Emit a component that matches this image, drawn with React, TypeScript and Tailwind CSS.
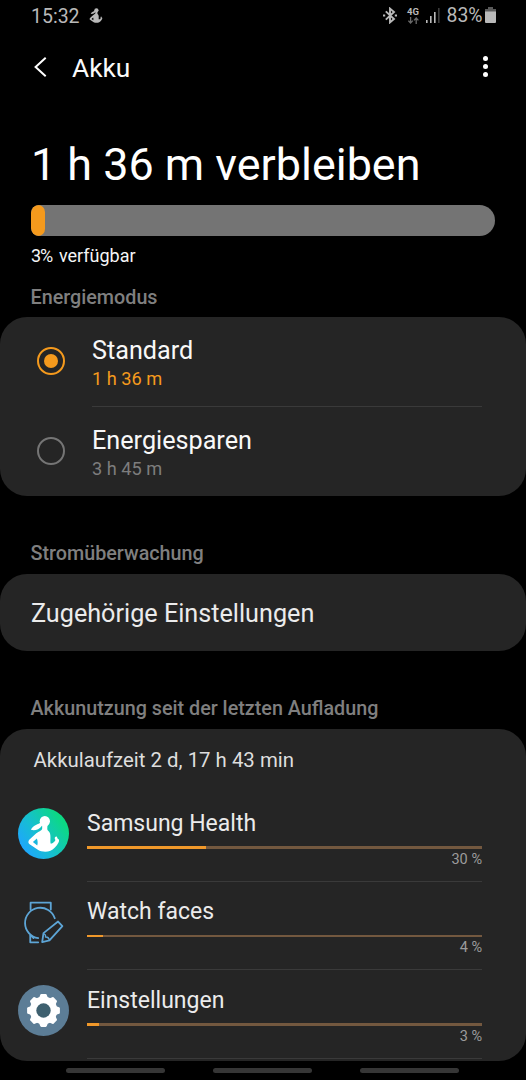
import { ReactNode } from 'react';

function HealthFigure() {
  return (
    <g>
      <circle cx="104" cy="64" r="15.5" />
      <path d="M93 67C84 74 70 74 62 90C72 93 86 91 96 77Z" />
      <path
        fillRule="evenodd"
        d="M96 74H112C112 85 110 89 114 93C120 98 121 104 121 112C121 121 120 127 122 132C129 131 134 126 136 121C132 115 134 110 140 110L143 117C148 118 148 124 145 129C140 140 130 149 121 153C110 158 92 156 84 151L57 133C53 129 54 124 57 120L75 103C84 95 96 93 96 86ZM80 116L68 127L81 137C83 131 83 124 80 116Z"
      />
    </g>
  );
}

function HealthIcon() {
  return (
    <svg viewBox="23 24 154 154" className="size-[51px]">
      <defs>
        <linearGradient id="health" x1="0.1" y1="0.85" x2="0.9" y2="0.3">
          <stop offset="0" stopColor="#1fa5ff" />
          <stop offset="0.45" stopColor="#16bfd0" />
          <stop offset="1" stopColor="#0cd984" />
        </linearGradient>
      </defs>
      <circle cx="100" cy="101" r="77" fill="url(#health)" />
      <g fill="#fff">
        <HealthFigure />
      </g>
    </svg>
  );
}

function WatchIcon() {
  return (
    <svg
      viewBox="23 20 154 154"
      className="size-[51px]"
      fill="none"
      stroke="#5da5d6"
      strokeWidth="5.5"
      strokeLinejoin="round"
      strokeLinecap="round"
    >
      <path d="M61 58V37H122V58" />
      <path d="M134 84A46 46 0 1 0 84 144" />
      <path d="M60 136V157H84" />
      <path d="M61 136L70 144" />
      <path d="M100 129L144 94L157 108L118 151L96 156Z" />
      <path d="M101 131C106 133 107 137 106 141C112 140 116 144 118 150" strokeWidth="4" />
    </svg>
  );
}

function SettingsIcon() {
  return (
    <svg viewBox="-25.5 -25.5 51 51" className="size-[51px]">
      <circle r="25.5" fill="#5c7d96" />
      <g fill="#fff">
        <circle r="13.9" />
        {[0, 45, 90, 135, 180, 225, 270, 315].map((a) => (
          <path key={a} d="M-4.6 -12L-3.3 -15.6Q-3 -16.4 -2.2 -16.4H2.2Q3 -16.4 3.3 -15.6L4.6 -12Z" transform={`rotate(${a})`} />
        ))}
      </g>
      <circle r="7.2" fill="#3e606f" />
    </svg>
  );
}

function StatusBar() {
  return (
    <div className="flex h-[31px] items-center pl-[31px] pr-[30px] text-[#b9b9b9]">
      <span className="pt-px text-[19.5px] leading-[31px]">15:32</span>
      <svg viewBox="50 47 102 110" className="ml-[9px] h-[15px] w-[14px]" fill="#b9b9b9">
        <HealthFigure />
      </svg>
      <div className="ml-auto flex items-center">
        <svg viewBox="0 0 14 17" className="mb-px h-[17px] w-[14px]" fill="none" stroke="#b9b9b9" strokeWidth="1.9">
          <path d="M2.8 4.4L11 12L7 15.4V1.6L11 5L2.8 12.6" />
          <path d="M0 8.5H2.2M11.8 8.5H14" strokeWidth="2.2" />
        </svg>
        <div className="ml-[10px] flex w-3 flex-col items-center">
          <span className="text-[9.5px] font-bold leading-[9px]">4G</span>
          <svg viewBox="0 0 11 7" className="mt-px h-[7px] w-[11px]" fill="none" stroke="#6a6a6a" strokeWidth="1.3">
            <path d="M2.6 0V6M0.4 3.6L2.6 6L4.8 3.6M8.2 7V1M6 3.4L8.2 1L10.4 3.4" />
          </svg>
        </div>
        <svg viewBox="0 0 14 15" className="ml-[7px] h-[15px] w-[14px]" fill="#b9b9b9">
          <rect x="0" y="12" width="1.6" height="3" />
          <rect x="4" y="8" width="1.6" height="7" />
          <rect x="8" y="4" width="1.6" height="11" />
          <rect x="12" y="0" width="1.6" height="15" fill="#3c3c3c" />
        </svg>
        <span className="ml-[6.5px] text-[19.4px] leading-[31px]">83%</span>
        <svg viewBox="0 0 11 16" className="mb-px ml-[2.5px] h-4 w-[11px]">
          <path d="M3 0H8V2H11V5H0V2H3Z" fill="#5a5a5a" />
          <path d="M0 4.5H11V15Q11 16 10 16H1Q0 16 0 15Z" fill="#b9b9b9" />
        </svg>
      </div>
    </div>
  );
}

function SectionTitle({ children }: { children: ReactNode }) {
  return <h2 className="pl-[30.5px] text-[19.75px] font-medium leading-6 text-[#7f7f7f]">{children}</h2>;
}

function ModeRow({ title, time, selected }: { title: string; time: string; selected?: boolean }) {
  return (
    <div className="flex pl-[37px] pr-11">
      <div
        className={
          selected
            ? 'mt-[30px] flex size-7 items-center justify-center rounded-full border-2 border-[#f59a1d]'
            : 'mt-[30px] flex size-7 items-center justify-center rounded-full border-2 border-[#757575]'
        }
      >
        {selected && <div className="size-[14px] rounded-full bg-[#f59a1d]" />}
      </div>
      <div
        className={
          selected
            ? 'ml-[27px] h-[90px] flex-1 border-b border-[#3a3a3a] pt-[19px]'
            : 'ml-[27px] h-[89px] flex-1 pt-[19px]'
        }
      >
        <div className="text-[25.2px] leading-[30px] text-[#f8f8f8]">{title}</div>
        <div className={selected ? 'mt-[2px] text-[18.2px] leading-[22px] text-[#f59a1d]' : 'mt-[2px] text-[18.2px] leading-[22px] text-[#7d7d7d]'}>
          {time}
        </div>
      </div>
    </div>
  );
}

const apps = [
  { name: 'Samsung Health', percent: 30, icon: <HealthIcon /> },
  { name: 'Watch faces', percent: 4, icon: <WatchIcon /> },
  { name: 'Einstellungen', percent: 3, icon: <SettingsIcon /> },
];

export default function App() {
  return (
    <div className="h-[1080px] w-[526px] overflow-hidden bg-black font-['Roboto',sans-serif]">
      <StatusBar />

      <header className="flex h-[74px] items-center pl-[34px] pr-[38px]">
        <svg viewBox="0 0 13 20" className="mb-[2px] h-5 w-[13px]" fill="none" stroke="#fff" strokeWidth="2">
          <path d="M11.7 0.8L1.6 10L11.7 19.2" />
        </svg>
        <h1 className="ml-[25px] text-[26.3px] leading-[30px] text-[#fafafa]">Akku</h1>
        <div className="mb-[3px] ml-auto flex flex-col gap-[3px]">
          <span className="size-[5px] rounded-full bg-white" />
          <span className="size-[5px] rounded-full bg-white" />
          <span className="size-[5px] rounded-full bg-white" />
        </div>
      </header>

      <div className="mt-[30px] px-[31px]">
        <div className="whitespace-nowrap text-[44.9px] leading-[60px] text-white">1 h 36 m verbleiben</div>
        <div className="mt-[10px] h-[31px] w-[464px] overflow-hidden rounded-r-[15.5px] rounded-l-[8px] bg-[#747474]">
          <div className="h-full w-[14px] rounded-[7px] bg-[#f59a1d]" />
        </div>
        <div className="mt-[10px] flex gap-[7px] text-[18px] leading-5 text-[#f5f5f5]">
          <span className="tracking-[-1.2px]">3%</span>
          <span>verfügbar</span>
        </div>
      </div>

      <section className="mt-5">
        <SectionTitle>Energiemodus</SectionTitle>
        <div className="mt-[7px] rounded-[27px] bg-[#252525]">
          <ModeRow title="Standard" time="1 h 36 m" selected />
          <ModeRow title="Energiesparen" time="3 h 45 m" />
        </div>
      </section>

      <section className="mt-[46px]">
        <SectionTitle>Stromüberwachung</SectionTitle>
        <div className="mt-2 flex h-[77px] items-center rounded-[27px] bg-[#252525] pl-[31px] pt-[2px] text-[25.2px] text-[#ebebeb]">
          Zugehörige Einstellungen
        </div>
      </section>

      <section className="mt-[46px]">
        <SectionTitle>Akkunutzung seit der letzten Aufladung</SectionTitle>
        <div className="mt-2 h-[332px] overflow-hidden rounded-[27px] bg-[#252525] pt-[19px]">
          <div className="pl-[33.5px] text-[20.4px] leading-6 text-[#dedede]">Akkulaufzeit 2 d, 17 h 43 min</div>
          <div className="mt-[21px]">
            {apps.map((app) => (
              <div key={app.name} className="flex h-[88.6px] pl-[18px] pr-11">
                <div className="mt-[15px]">{app.icon}</div>
                <div className="ml-[18px] flex-1 border-b border-[#3a3a3a] pt-[16.5px]">
                  <div className="text-[23px] leading-7 text-[#ebebeb]">{app.name}</div>
                  <div className="mt-[8.5px] h-[2.5px] bg-[#73583f]">
                    <div className="h-full bg-[#f0982a]" style={{ width: `${app.percent}%` }} />
                  </div>
                  <div className="mt-[3px] text-right text-[14.5px] leading-[15px] text-[#9c9c9c]">{app.percent} %</div>
                </div>
              </div>
            ))}
          </div>
        </div>
      </section>

      <nav className="mt-[7px] flex justify-between pl-[66px] pr-[67px]">
        <span className="h-[5px] w-[99px] rounded-full bg-[#363636]" />
        <span className="h-[5px] w-[99px] rounded-full bg-[#363636]" />
        <span className="h-[5px] w-[99px] rounded-full bg-[#363636]" />
      </nav>
    </div>
  );
}
